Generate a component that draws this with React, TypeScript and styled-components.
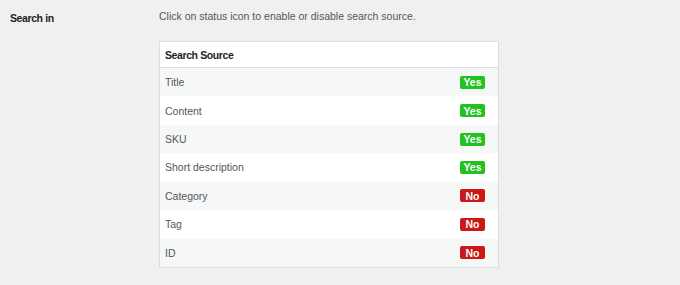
import React from 'react'
import styled, { createGlobalStyle } from 'styled-components'

const GlobalStyle = createGlobalStyle`
  html, body {
    margin: 0;
    padding: 0;
    background: #f0f0f1;
    font-family: "Liberation Sans", Arial, sans-serif;
  }
`

const sources = [
  { name: 'Title', enabled: true },
  { name: 'Content', enabled: true },
  { name: 'SKU', enabled: true },
  { name: 'Short description', enabled: true },
  { name: 'Category', enabled: false },
  { name: 'Tag', enabled: false },
  { name: 'ID', enabled: false }
]

export default function App() {
  return (
    <>
      <GlobalStyle />
      <SettingRow>
        <Label>Search in</Label>
        <Field>
          <Description>Click on status icon to enable or disable search source.</Description>
          <SourceTable>
            <TableHead>Search Source</TableHead>
            {sources.map((source, i) => (
              <SourceRow key={source.name} striped={i % 2 === 0}>
                <SourceName>{source.name}</SourceName>
                <Status enabled={source.enabled}>{source.enabled ? 'Yes' : 'No'}</Status>
              </SourceRow>
            ))}
          </SourceTable>
        </Field>
      </SettingRow>
    </>
  )
}

const SettingRow = styled.div`
  display: grid;
  grid-template-columns: 149px 340px;
  padding: 9px 0 0 10px;
`

const Label = styled.div`
  font-size: 10.5px;
  line-height: 14px;
  font-weight: bold;
  letter-spacing: -0.4px;
  color: #1d2327;
  padding-top: 2px;
`

const Field = styled.div`
  display: flex;
  flex-direction: column;
`

const Description = styled.p`
  margin: 0;
  font-size: 10.5px;
  line-height: 14px;
  color: #50575e;
`

const SourceTable = styled.div`
  margin-top: 18px;
  border: 1px solid #dcdcde;
  background: #fff;
  display: flex;
  flex-direction: column;
`

const TableHead = styled.div`
  height: 25px;
  display: flex;
  align-items: center;
  padding-left: 5px;
  border-bottom: 1px solid #dcdcde;
  font-size: 10.5px;
  font-weight: bold;
  letter-spacing: -0.4px;
  color: #1d2327;
`

const SourceRow = styled.div<{ striped: boolean }>`
  height: 28.43px;
  display: flex;
  align-items: center;
  justify-content: space-between;
  padding: 0 13px 0 5px;
  background: ${p => (p.striped ? '#f6f7f7' : '#fff')};
`

const SourceName = styled.span`
  font-size: 10.5px;
  color: #50575e;
`

const Status = styled.span<{ enabled: boolean }>`
  width: 25px;
  height: 13px;
  border-radius: 2px;
  display: flex;
  align-items: center;
  justify-content: center;
  font-size: 10.5px;
  font-weight: bold;
  color: #fff;
  background: ${p => (p.enabled ? '#1fc21f' : '#cc1818')};
`
